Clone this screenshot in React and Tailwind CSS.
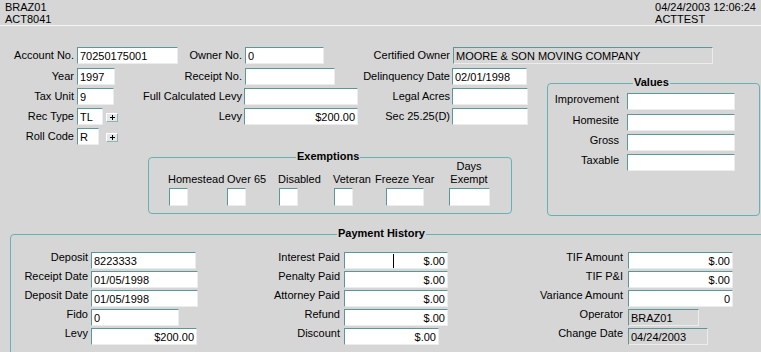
import React from "react";

function Input({ w, value = "", right = false, gray = false, caret = false }) {
  return (
    <div
      className={`relative h-[17px] shrink-0 overflow-hidden whitespace-nowrap border border-t-[#5b9797] border-l-[#5b9797] border-r-[#ececec] border-b-[#ececec] px-[2px] pt-[2px] leading-[13px] ${
        gray ? "bg-[#d6d6d6]" : "bg-white"
      } ${right ? "text-right" : "text-left"} ${w}`}
    >
      {value}
      {caret && <div className="absolute left-[48px] top-[1px] h-[14px] w-px bg-black" />}
    </div>
  );
}

function Field({ label, lw, gap = "ml-[3px]", pt = "pt-[2px]", row = "mb-[3px]", ...input }) {
  return (
    <div className={`flex items-start ${row}`}>
      <div className={`flex shrink-0 justify-end whitespace-nowrap leading-[13px] ${lw} ${pt}`}>
        {label}
      </div>
      <div className={gap}>
        <Input {...input} />
      </div>
    </div>
  );
}

function PlusButton({ ml }) {
  return (
    <div
      className={`mt-[5px] flex h-[9px] w-[12px] items-center justify-center border border-t-[#ffffff] border-l-[#ffffff] border-r-[#8fb3b3] border-b-[#8fb3b3] bg-[#e6e6e6] ${ml}`}
    >
      <svg width="5" height="5" viewBox="0 0 5 5">
        <path d="M2.5 0v5M0 2.5h5" stroke="#000" strokeWidth="1" />
      </svg>
    </div>
  );
}

function Check({ w = "w-[19px]" }) {
  return (
    <div
      className={`mt-[2px] h-[18px] border border-t-[#5b9797] border-l-[#5b9797] border-r-[#ececec] border-b-[#ececec] bg-white ${w}`}
    />
  );
}

function Legend({ children, pos }) {
  return (
    <div className={`absolute -top-[8px] bg-[#d6d6d6] px-[1px] font-bold leading-[13px] ${pos}`}>
      {children}
    </div>
  );
}

export default function App() {
  return (
    <div className="h-[352px] w-[761px] overflow-hidden bg-[#d6d6d6] font-['Liberation_Sans',Arial,sans-serif] text-[11px] text-black">
      <header className="flex h-[26px] justify-between border-b border-[#f4f4f4] px-[5px] pt-[1px] leading-[12px]">
        <div>
          <div>BRAZ01</div>
          <div>ACT8041</div>
        </div>
        <div>
          <div>04/24/2003 12:06:24</div>
          <div>ACTTEST</div>
        </div>
      </header>

      <div className="pt-[21px]">
        <div className="flex items-start">
          <Field label="Account No." lw="w-[74px]" w="w-[101px]" value="70250175001" row="mb-[4px]" />
          <Field label="Owner No." lw="w-[64px]" w="w-[79px]" value="0" row="mb-[4px]" />
          <Field
            label="Certified Owner"
            lw="w-[126px]"
            w="w-[260px]"
            gray
            value="MOORE & SON MOVING COMPANY"
            row="mb-[4px]"
          />
        </div>

        <div className="flex items-start">
          <div className="flex flex-col">
            <div className="flex">
              <div className="w-[130px]">
                <Field label="Year" lw="w-[74px]" w="w-[38px]" value="1997" />
                <Field label="Tax Unit" lw="w-[74px]" w="w-[37px]" value="9" />
                <div className="mb-[3px] flex items-start">
                  <Field label="Rec Type" lw="w-[74px]" w="w-[26px]" value="TL" row="" />
                  <PlusButton ml="ml-[3px]" />
                </div>
                <div className="mb-[3px] flex items-start">
                  <Field label="Roll Code" lw="w-[74px]" w="w-[22px]" value="R" row="" />
                  <PlusButton ml="ml-[7px]" />
                </div>
              </div>
              <div className="w-[230px]">
                <Field label="Receipt No." lw="w-[112px]" w="w-[90px]" />
                <Field label="Full Calculated Levy" lw="w-[112px]" gap="ml-[2px]" w="w-[114px]" />
                <Field label="Levy" lw="w-[112px]" gap="ml-[2px]" w="w-[114px]" value="$200.00" right />
              </div>
              <div>
                <Field label="Delinquency Date" lw="w-[90px]" gap="ml-[2px]" w="w-[75px]" value="02/01/1998" />
                <Field label="Legal Acres" lw="w-[90px]" gap="ml-[2px]" w="w-[76px]" />
                <Field label="Sec 25.25(D)" lw="w-[90px]" gap="ml-[2px]" w="w-[76px]" />
              </div>
            </div>

            <div className="relative ml-[148px] mt-[9px] h-[57px] w-[364px] rounded-[4px] border border-[#66b2b2]">
              <Legend pos="left-[147px]">Exemptions</Legend>
              <div className="flex h-full items-end pb-[7px] pl-[19px] leading-[13px]">
                <div className="flex w-[59px] flex-col items-start">
                  <div>Homestead</div>
                  <Check w="w-[19px] ml-[1px]" />
                </div>
                <div className="flex w-[51px] flex-col items-start">
                  <div>Over 65</div>
                  <Check />
                </div>
                <div className="flex w-[55px] flex-col items-start">
                  <div>Disabled</div>
                  <Check w="w-[19px] ml-[1px]" />
                </div>
                <div className="flex w-[42px] flex-col items-start">
                  <div>Veteran</div>
                  <Check w="w-[19px] ml-[1px]" />
                </div>
                <div className="flex w-[62px] flex-col items-start whitespace-nowrap">
                  <div>Freeze Year</div>
                  <Check w="w-[38px] ml-[11px]" />
                </div>
                <div className="flex w-[64px] flex-col items-center text-center">
                  <div>Days</div>
                  <div>Exempt</div>
                  <Check w="w-[41px]" />
                </div>
              </div>
            </div>
          </div>

          <div className="relative ml-[19px] mt-[15px] h-[133px] w-[213px] rounded-[4px] border border-[#66b2b2] pt-[9px]">
            <Legend pos="left-[85px]">Values</Legend>
            <Field label="Improvement" lw="w-[71px]" gap="ml-[8px]" pt="pt-0" w="w-[108px]" row="mb-[4px]" />
            <Field label="Homesite" lw="w-[71px]" gap="ml-[8px]" pt="pt-0" w="w-[108px]" />
            <Field label="Gross" lw="w-[71px]" gap="ml-[8px]" pt="pt-0" w="w-[108px]" />
            <Field label="Taxable" lw="w-[71px]" gap="ml-[8px]" pt="pt-0" w="w-[108px]" />
          </div>
        </div>

        <div className="relative ml-[10px] mt-[18px] h-[130px] w-[770px] rounded-[4px] border border-[#66b2b2] pt-[17px]">
          <Legend pos="left-[326px]">Payment History</Legend>
          <div className="flex">
            <div className="w-[209px]">
              <Field label="Deposit" lw="w-[77px]" pt="-mt-[1px]" w="w-[105px]" value="8223333" row="mb-[2px]" />
              <Field label="Receipt Date" lw="w-[77px]" pt="-mt-[1px]" w="w-[107px]" value="01/05/1998" row="mb-[2px]" />
              <Field label="Deposit Date" lw="w-[77px]" pt="-mt-[1px]" w="w-[107px]" value="01/05/1998" row="mb-[2px]" />
              <Field label="Fido" lw="w-[77px]" pt="-mt-[1px]" w="w-[88px]" value="0" row="mb-[2px]" />
              <Field label="Levy" lw="w-[77px]" pt="-mt-[1px]" w="w-[106px]" value="$200.00" right row="mb-[2px]" />
            </div>
            <div className="w-[230px]">
              <Field label="Interest Paid" lw="w-[120px]" gap="ml-[4px]" pt="-mt-[1px]" w="w-[104px]" value="$.00" right caret row="mb-[2px]" />
              <Field label="Penalty Paid" lw="w-[120px]" gap="ml-[4px]" pt="-mt-[1px]" w="w-[104px]" value="$.00" right row="mb-[2px]" />
              <Field label="Attorney Paid" lw="w-[120px]" gap="ml-[4px]" pt="-mt-[1px]" w="w-[104px]" value="$.00" right row="mb-[2px]" />
              <Field label="Refund" lw="w-[120px]" gap="ml-[4px]" pt="-mt-[1px]" w="w-[104px]" value="$.00" right row="mb-[2px]" />
              <Field label="Discount" lw="w-[120px]" gap="ml-[4px]" pt="-mt-[1px]" w="w-[95px]" value="$.00" right row="mb-[2px]" />
            </div>
            <div>
              <Field label="TIF Amount" lw="w-[173px]" gap="ml-[5px]" pt="-mt-[1px]" w="w-[105px]" value="$.00" right row="mb-[2px]" />
              <Field label="TIF P&I" lw="w-[173px]" gap="ml-[5px]" pt="-mt-[1px]" w="w-[105px]" value="$.00" right row="mb-[2px]" />
              <Field label="Variance Amount" lw="w-[173px]" gap="ml-[5px]" pt="-mt-[1px]" w="w-[105px]" value="0" right row="mb-[2px]" />
              <Field label="Operator" lw="w-[173px]" gap="ml-[5px]" pt="-mt-[1px]" w="w-[71px]" value="BRAZ01" gray row="mb-[2px]" />
              <Field label="Change Date" lw="w-[173px]" gap="ml-[5px]" pt="-mt-[1px]" w="w-[80px]" value="04/24/2003" gray row="mb-[2px]" />
            </div>
          </div>
        </div>
      </div>
    </div>
  );
}
